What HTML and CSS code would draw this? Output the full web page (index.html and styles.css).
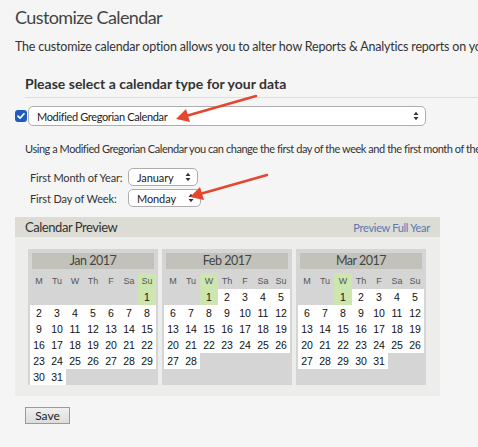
FILE: index.html
```
<!DOCTYPE html>
<html>
<head>
<meta charset="utf-8">
<link rel="stylesheet" href="styles.css">
</head>
<body>
<div class="page">
  <h1 class="title">Customize Calendar</h1>
  <p class="desc">The customize calendar option allows you to alter how Reports &amp; Analytics reports on your data</p>
  <h2 class="heading">Please select a calendar type for your data</h2>
  <div class="type-row">
    <span class="check"><svg width="12" height="12" viewBox="0 0 12 12"><path d="M3 6.2 L5 8.2 L9 3.8" fill="none" stroke="#fff" stroke-width="1.7" stroke-linecap="round" stroke-linejoin="round"/></svg></span>
    <div class="select wide"><span>Modified Gregorian Calendar</span><svg class="updown" width="6" height="10" viewBox="0 0 6 10"><path d="M0.5 4 L3 0.8 L5.5 4Z M0.5 6 L3 9.2 L5.5 6Z" fill="#333"/></svg></div>
  </div>
  <p class="using">Using a Modified Gregorian Calendar you can change the first day of the week and the first month of the year</p>
  <div class="fields">
    <span class="label">First Month of Year:</span>
    <div class="select small"><span>January</span><svg class="updown" width="6" height="10" viewBox="0 0 6 10"><path d="M0.5 4 L3 0.8 L5.5 4Z M0.5 6 L3 9.2 L5.5 6Z" fill="#333"/></svg></div>
    <span class="label">First Day of Week:</span>
    <div class="select small day"><span>Monday</span><svg class="updown" width="6" height="10" viewBox="0 0 6 10"><path d="M0.5 4 L3 0.8 L5.5 4Z M0.5 6 L3 9.2 L5.5 6Z" fill="#333"/></svg></div>
  </div>

  <div class="preview">
    <div class="preview-head"><span>Calendar Preview</span><a class="full">Preview Full Year</a></div>
    <div class="preview-body">
      <div class="month">
        <div class="mhead">Jan 2017</div>
        <div class="grid">
          <span class="h">M</span><span class="h">Tu</span><span class="h">W</span><span class="h">Th</span><span class="h">F</span><span class="h">Sa</span><span class="h g">Su</span>
          <span class="d"></span><span class="d"></span><span class="d"></span><span class="d"></span><span class="d"></span><span class="d"></span><span class="d g">1</span>
          <span class="d w">2</span><span class="d w">3</span><span class="d w">4</span><span class="d w">5</span><span class="d w">6</span><span class="d w">7</span><span class="d w">8</span>
          <span class="d w">9</span><span class="d w">10</span><span class="d w">11</span><span class="d w">12</span><span class="d w">13</span><span class="d w">14</span><span class="d w">15</span>
          <span class="d w">16</span><span class="d w">17</span><span class="d w">18</span><span class="d w">19</span><span class="d w">20</span><span class="d w">21</span><span class="d w">22</span>
          <span class="d w">23</span><span class="d w">24</span><span class="d w">25</span><span class="d w">26</span><span class="d w">27</span><span class="d w">28</span><span class="d w">29</span>
          <span class="d w">30</span><span class="d w">31</span>
        </div>
      </div>
      <div class="month">
        <div class="mhead">Feb 2017</div>
        <div class="grid">
          <span class="h">M</span><span class="h">Tu</span><span class="h g">W</span><span class="h">Th</span><span class="h">F</span><span class="h">Sa</span><span class="h">Su</span>
          <span class="d"></span><span class="d"></span><span class="d g">1</span><span class="d w">2</span><span class="d w">3</span><span class="d w">4</span><span class="d w">5</span>
          <span class="d w">6</span><span class="d w">7</span><span class="d w">8</span><span class="d w">9</span><span class="d w">10</span><span class="d w">11</span><span class="d w">12</span>
          <span class="d w">13</span><span class="d w">14</span><span class="d w">15</span><span class="d w">16</span><span class="d w">17</span><span class="d w">18</span><span class="d w">19</span>
          <span class="d w">20</span><span class="d w">21</span><span class="d w">22</span><span class="d w">23</span><span class="d w">24</span><span class="d w">25</span><span class="d w">26</span>
          <span class="d w">27</span><span class="d w">28</span>
        </div>
      </div>
      <div class="month">
        <div class="mhead">Mar 2017</div>
        <div class="grid">
          <span class="h">M</span><span class="h">Tu</span><span class="h g">W</span><span class="h">Th</span><span class="h">F</span><span class="h">Sa</span><span class="h">Su</span>
          <span class="d"></span><span class="d"></span><span class="d g">1</span><span class="d w">2</span><span class="d w">3</span><span class="d w">4</span><span class="d w">5</span>
          <span class="d w">6</span><span class="d w">7</span><span class="d w">8</span><span class="d w">9</span><span class="d w">10</span><span class="d w">11</span><span class="d w">12</span>
          <span class="d w">13</span><span class="d w">14</span><span class="d w">15</span><span class="d w">16</span><span class="d w">17</span><span class="d w">18</span><span class="d w">19</span>
          <span class="d w">20</span><span class="d w">21</span><span class="d w">22</span><span class="d w">23</span><span class="d w">24</span><span class="d w">25</span><span class="d w">26</span>
          <span class="d w">27</span><span class="d w">28</span><span class="d w">29</span><span class="d w">30</span><span class="d w">31</span>
        </div>
      </div>
    </div>
  </div>
  <button class="save">Save</button>
</div>
<svg class="arrows" width="478" height="447" viewBox="0 0 478 447">
  <line x1="256" y1="96" x2="186" y2="116" stroke="#e5472e" stroke-width="2.6" stroke-linecap="round"/>
  <polygon points="176,119 190,122 186,109" fill="#e5472e"/>
  <line x1="267" y1="175" x2="200" y2="194" stroke="#e5472e" stroke-width="2.6" stroke-linecap="round"/>
  <polygon points="190,197 204,200 200,187" fill="#e5472e"/>
</svg>
</body>
</html>
```
FILE: styles.css
```
html, body {
  margin: 0;
}
body {
  background: #f5f5f5;
  font-family: Lato, "Open Sans", sans-serif;
  color: #333;
  width: 478px;
  height: 447px;
  overflow: hidden;
  position: relative;
}
.page {
  padding-left: 15px;
  white-space: nowrap;
}
.title {
  font-size: 18px;
  letter-spacing: -0.6px;
  font-weight: normal;
  color: #444;
  margin: 0;
  padding-top: 5px;
  line-height: 24px;
}
.desc {
  font-size: 12.5px;
  letter-spacing: -0.2px;
  line-height: 16px;
  margin: 10px 0 0;
  color: #333;
}
.heading {
  font-size: 14px;
  font-weight: bold;
  color: #333;
  line-height: 18px;
  margin: 20px 0 0 10px;
  padding-bottom: 4px;
  border-bottom: 1px solid #dedede;
}
.type-row {
  display: flex;
  align-items: center;
  margin-top: 8px;
}
.check {
  width: 12px;
  height: 12px;
  border-radius: 3px;
  background: #1f5cc0;
  margin-right: 1px;
  display: flex;
}
.select {
  box-sizing: border-box;
  display: flex;
  align-items: center;
  justify-content: space-between;
  background: #fff;
  border: 1px solid #adadad;
  border-radius: 5px;
  font-size: 11px;
  letter-spacing: -0.35px;
  color: #222;
}
.select.wide {
  width: 398px;
  height: 20px;
  padding: 0 6px 0 8px;
}
.updown {
  display: block;
}
.using {
  font-size: 11px;
  letter-spacing: -0.45px;
  line-height: 16px;
  margin: 15px 0 0 10px;
}
.fields {
  display: grid;
  grid-template-columns: 98px auto;
  row-gap: 3px;
  margin: 11px 0 0 15px;
  align-items: center;
  justify-items: start;
}
.label {
  font-size: 11px;
  letter-spacing: -0.15px;
}
.select.small {
  width: 70px;
  height: 18px;
  padding: 0 6px 0 8px;
  letter-spacing: -0.1px;
}
.select.small.day {
  width: 73px;
}
.preview {
  width: 425px;
  margin-top: 10px;
  background: #ededeb;
}
.preview-head {
  height: 20px;
  background: #dcdcd4;
  display: flex;
  align-items: center;
  justify-content: space-between;
  padding: 0 10px;
  font-size: 13px;
  letter-spacing: -0.45px;
  color: #333;
}
.full {
  color: #5877b3;
  font-size: 11px;
  letter-spacing: -0.3px;
}
.preview-body {
  display: flex;
  gap: 4px;
  padding: 12px 14px 11px 13px;
}
.month {
  box-sizing: border-box;
  width: 130px;
  height: 136px;
  background: #d5d5d5;
  padding: 4px 2px 0;
}
.mhead {
  margin: 0 2px;
  height: 16px;
  line-height: 16px;
  background: #c2c2ba;
  text-align: center;
  font-size: 12.5px;
  letter-spacing: -0.5px;
  color: #444;
}
.grid {
  display: grid;
  grid-template-columns: repeat(7, 18px);
  grid-auto-rows: 16px;
  margin-top: 4px;
}
.h {
  font-family: "Liberation Sans", Arial, sans-serif;
  font-size: 9px;
  color: #555;
  text-align: center;
  line-height: 17px;
}
.d {
  font-family: "Liberation Sans", Arial, sans-serif;
  font-size: 10.5px;
  color: #111;
  text-align: center;
  line-height: 16px;
}
.w {
  background: #fff;
}
.g {
  background: #cde6b0;
}
.save {
  display: block;
  margin: 11px 0 0 10px;
  width: 45px;
  height: 17px;
  padding: 0;
  border: 1px solid #9a9a9a;
  background: linear-gradient(#f0f0f0, #dcdcdc);
  font-family: Lato, "Open Sans", sans-serif;
  font-size: 12px;
  color: #222;
}
.arrows {
  position: absolute;
  left: 0;
  top: 0;
  pointer-events: none;
}
```
